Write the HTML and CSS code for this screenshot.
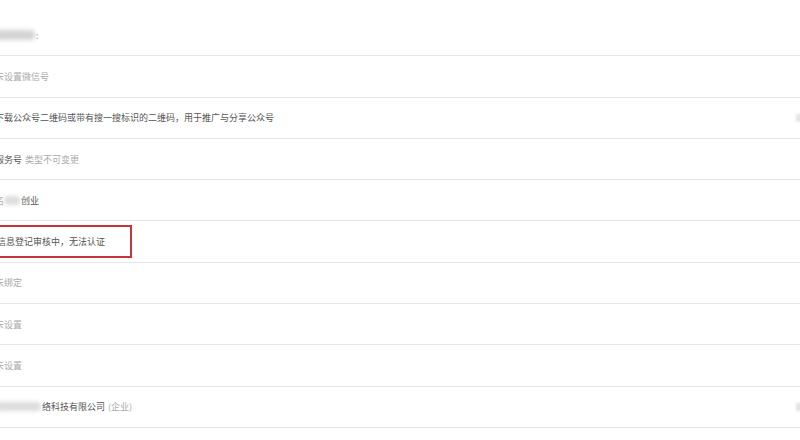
FILE: index.html
```html
<!DOCTYPE html>
<html lang="zh-CN">
  <head>
    <meta charset="UTF-8" />
    <title>公众号设置</title>
    <link rel="stylesheet" href="styles.css">
  </head>
  <body>
    <ul class="info-list">
      <li class="row row-first">
        <span class="blur blur-name"></span><span class="muted">:</span>
      </li>
      <li class="row"><span class="muted">未设置微信号</span></li>
      <li class="row">
        <span class="text">下载公众号二维码或带有搜一搜标识的二维码，用于推广与分享公众号</span>
        <span class="edge-mark"></span>
      </li>
      <li class="row">
        <span class="text">服务号</span> <span class="muted">类型不可变更</span>
      </li>
      <li class="row">
        <span class="muted">名</span><span class="blur blur-short"></span><span class="text">创业</span>
      </li>
      <li class="row">
        <span class="alert-box">信息登记审核中，无法认证</span>
      </li>
      <li class="row"><span class="muted">未绑定</span></li>
      <li class="row"><span class="muted">未设置</span></li>
      <li class="row"><span class="muted">未设置</span></li>
      <li class="row">
        <span class="blur blur-company"></span><span class="text">络科技有限公司</span>
        <span class="muted">(企业)</span>
        <span class="edge-mark"></span>
      </li>
    </ul>
  </body>
</html>
```

FILE: styles.css
```css
body {
  margin: 0;
  background: #fff;
  font-family: "Noto Sans CJK SC", "Noto Sans", sans-serif;
  font-size: 9px;
  color: #555;
  overflow: hidden;
}

.info-list {
  list-style: none;
  margin: 0 0 0 -5px;
  padding: 15px 0 0 0;
}

.row {
  display: flex;
  align-items: center;
  height: 40.3px;
  border-bottom: 1px solid #e6e6e6;
  white-space: nowrap;
}

.text {
  color: #555;
}

.muted {
  color: #aaa;
}

.row .muted + .text,
.text + .muted {
  margin-left: 3px;
}

.blur {
  display: inline-block;
  height: 9px;
  background: #dcdcdc;
  border-radius: 4px;
  filter: blur(2px);
}

.blur-name {
  width: 40px;
  height: 10px;
  margin-right: 1px;
  background: #d4d4d4;
}

.blur-short {
  width: 16px;
  margin-right: 1px;
}

.blur-company {
  width: 46px;
  margin-right: 1px;
}

.alert-box {
  display: inline-block;
  height: 29px;
  line-height: 29px;
  margin-left: -8px;
  padding: 0 25px 0 8px;
  border: 2px solid #c8333c;
  color: #555;
}

.edge-mark {
  margin-left: auto;
  width: 6px;
  height: 8px;
  background: #e4e4e4;
  filter: blur(1px);
  margin-right: -2px;
}
```
